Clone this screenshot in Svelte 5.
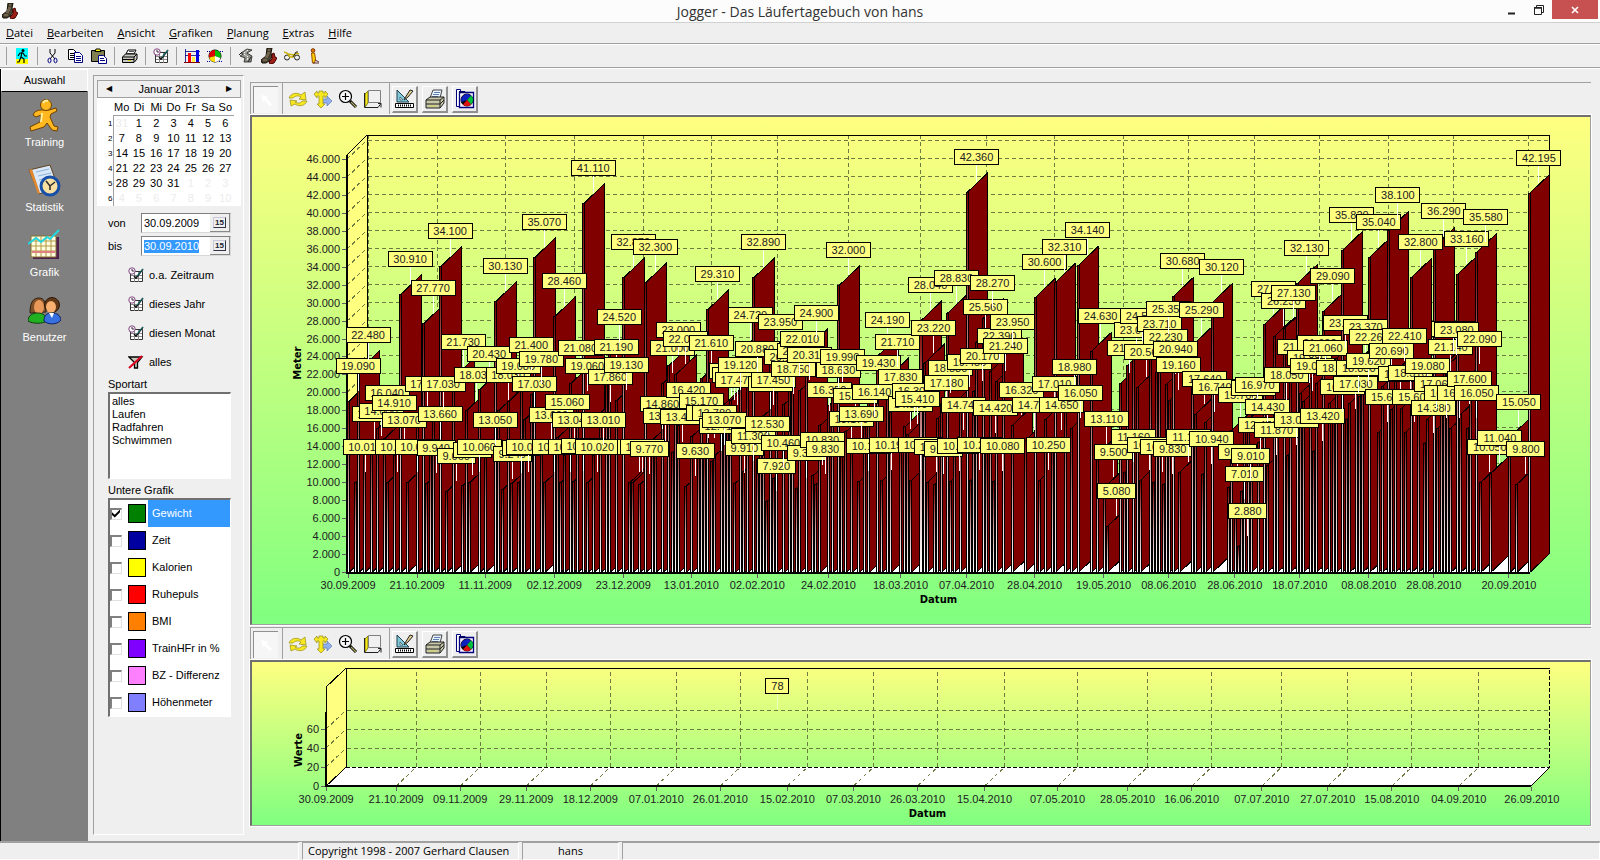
<script lang="ts">
	import { onMount } from 'svelte';

	const menus = ['Datei', 'Bearbeiten', 'Ansicht', 'Grafiken', 'Planung', 'Extras', 'Hilfe'];

	const tools = [
		['run'],
		['cut', 'copy', 'paste'],
		['print'],
		['period'],
		['bars', 'pie'],
		['road', 'shoe', 'bike', 'person']
	];
	const toolTitles: Record<string, string> = {
		run: 'Training',
		cut: 'Ausschneiden',
		copy: 'Kopieren',
		paste: 'Einfügen',
		print: 'Drucken',
		period: 'Zeitraum',
		bars: 'Grafik',
		pie: 'Statistik',
		road: 'Strecken',
		shoe: 'Schuhe',
		bike: 'Räder',
		person: 'Benutzer',
		arrow: 'Auswahl',
		rotate: 'Drehen',
		move: 'Verschieben',
		zoom: 'Zoom',
		depth: 'Tiefe',
		edit: 'Bearbeiten',
		printer: 'Drucken',
		gallery: 'Kopieren'
	};

	const sections = ['Training', 'Statistik', 'Grafik', 'Benutzer'];
	const weekdays = ['Mo', 'Di', 'Mi', 'Do', 'Fr', 'Sa', 'So'];
	// first cell is the 31st of the previous month
	const weeks = Array.from({ length: 6 }, (_, w) =>
		Array.from({ length: 7 }, (_, d) => {
			const n = w * 7 + d;
			if (n === 0) return { day: 31, other: true };
			return n > 31 ? { day: n - 31, other: true } : { day: n, other: false };
		})
	);

	const sports = ['alles', 'Laufen', 'Radfahren', 'Schwimmen'];

	let series = $state([
		{ name: 'Gewicht', color: '#008000', on: true },
		{ name: 'Zeit', color: '#0000a0', on: false },
		{ name: 'Kalorien', color: '#ffff00', on: false },
		{ name: 'Ruhepuls', color: '#ff0000', on: false },
		{ name: 'BMI', color: '#ff8000', on: false },
		{ name: 'TrainHFr in %', color: '#8000ff', on: false },
		{ name: 'BZ - Differenz', color: '#ff80ff', on: false },
		{ name: 'Höhenmeter', color: '#8080ff', on: false }
	]);

	let from = $state('30.09.2009');
	let to = $state('30.09.2010');
	let toInput: HTMLInputElement | null = $state(null);

	onMount(() => {
		toInput?.focus();
		toInput?.select();
	});

	// [days since 30.09.2009, metres]
	const runs = [
		[0, 19090], [2, 10010], [3, 22480], [5, 13700], [7, 14000], [9, 16040], [11, 14910], [12, 10050],
		[14, 13070], [16, 30910], [18, 10000], [21, 17070], [23, 27770], [24, 9940], [25, 13660],
		[26, 17030], [28, 34100], [30, 9060], [32, 21730], [35, 9700], [36, 18030], [37, 10060],
		[40, 20430], [42, 13050], [45, 30130], [46, 18030], [47, 9240], [49, 19080], [50, 9900],
		[52, 10020], [53, 21400], [54, 17030], [56, 19780], [57, 35070], [59, 13600], [60, 10030],
		[63, 28460], [64, 15060], [65, 10020], [66, 13040], [68, 21080], [69, 10100], [70, 19060],
		[72, 41110], [73, 10020], [75, 13010], [77, 17860], [79, 21190], [80, 24520], [82, 19130],
		[84, 32870], [86, 10030], [87, 10010], [89, 9770], [91, 32300], [93, 14860], [94, 13500],
		[96, 21000], [98, 23000], [99, 13400], [100, 22000], [101, 16420], [103, 9630], [105, 15170],
		[107, 13840], [108, 21610], [109, 13780], [110, 29310], [111, 12410], [112, 13070],
		[114, 18500], [115, 18000], [116, 17470], [117, 19120], [118, 9910], [120, 24720],
		[121, 11300], [122, 20880], [124, 32890], [125, 12530], [126, 17060], [127, 17450],
		[128, 7920], [129, 23950], [130, 10460], [131, 20100], [133, 18750], [135, 20700],
		[136, 22010], [137, 9300], [138, 20310], [140, 24900], [142, 10830], [143, 9830],
		[144, 16350], [147, 18630], [148, 19990], [150, 32000], [151, 13170], [152, 15700],
		[154, 13690], [156, 10130], [158, 16140], [159, 19430], [162, 24190], [163, 10190],
		[165, 21710], [166, 17830], [169, 14800], [170, 16300], [171, 15410], [172, 10300],
		[175, 28040], [176, 23220], [177, 10050], [179, 9800], [180, 17180], [181, 18830],
		[183, 28830], [184, 10100], [185, 14740], [187, 19450], [189, 42360], [190, 10200],
		[191, 20170], [192, 25560], [194, 28270], [195, 14420], [196, 22390], [197, 10080],
		[198, 21240], [200, 23950], [203, 16320], [207, 14700], [210, 30600], [211, 10250],
		[213, 17010], [215, 14650], [216, 32310], [219, 18980], [221, 16050], [223, 34140],
		[227, 24630], [229, 13110], [231, 9500], [232, 5080], [236, 21040], [237, 11160],
		[238, 23040], [240, 24560], [241, 20560], [242, 10200], [245, 23710], [246, 10050],
		[247, 22230], [248, 25350], [249, 9830], [250, 20940], [251, 19160], [252, 30680],
		[254, 11180], [258, 25290], [259, 17640], [261, 10940], [262, 16740], [264, 30120],
		[269, 9510], [270, 15760], [271, 7010], [272, 2880], [273, 9010], [274, 16600],
		[275, 16970], [276, 12470], [278, 14430], [280, 27600], [281, 11870], [283, 26230],
		[284, 18050], [286, 27130], [287, 13050], [288, 21200], [290, 32130], [291, 19880],
		[292, 19080], [294, 21600], [295, 13420], [296, 21060], [298, 29090], [300, 18850],
		[301, 16700], [302, 23850], [304, 35820], [305, 17030], [306, 18830], [308, 23370],
		[309, 19620], [310, 22260], [312, 35040], [315, 15600], [316, 20690], [318, 38100],
		[319, 18150], [320, 22410], [322, 18310], [323, 15600], [325, 32800], [327, 19080],
		[329, 14380], [330, 17060], [332, 36290], [333, 16050], [334, 21140], [335, 23150],
		[336, 23080], [337, 16080], [339, 33160], [340, 17600], [342, 16050], [343, 22090],
		[345, 35580], [346, 10050], [349, 11040], [355, 15050], [357, 9800], [361, 42195]
	];

	const runTicks: [number, string][] = [
		[0, '30.09.2009'], [21, '21.10.2009'], [42, '11.11.2009'], [63, '02.12.2009'],
		[84, '23.12.2009'], [105, '13.01.2010'], [125, '02.02.2010'], [147, '24.02.2010'],
		[169, '18.03.2010'], [189, '07.04.2010'], [210, '28.04.2010'], [231, '19.05.2010'],
		[251, '08.06.2010'], [271, '28.06.2010'], [291, '18.07.2010'], [312, '08.08.2010'],
		[332, '28.08.2010'], [355, '20.09.2010']
	];
	const weightTicks: [number, string][] = [
		[0, '30.09.2009'], [21, '21.10.2009'], [40, '09.11.2009'], [60, '29.11.2009'],
		[79, '18.12.2009'], [99, '07.01.2010'], [118, '26.01.2010'], [138, '15.02.2010'],
		[158, '07.03.2010'], [177, '26.03.2010'], [197, '15.04.2010'], [219, '07.05.2010'],
		[240, '28.05.2010'], [259, '16.06.2010'], [280, '07.07.2010'], [300, '27.07.2010'],
		[319, '15.08.2010'], [339, '04.09.2010'], [361, '26.09.2010']
	];

	const DEPTH = 20;
	const runX = (day: number) => Math.round(96 + day * 3.268);
	const runY = (m: number) => Math.round(455 - m * 0.00898);
	const weightX = (day: number) => Math.round(74 + day * 3.338);
	const weightY = (v: number) => Math.round(124 - v * 0.95);

	function format(m: number) {
		if (m < 1000) return String(m);
		return `${Math.floor(m / 1000)}.${String(m % 1000).padStart(3, '0')}`;
	}

	const meterTicks = Array.from({ length: 24 }, (_, i) => i * 2000);
	const bars = runs.map(([day, m]) => ({ x: runX(day), y: runY(m), text: format(m) }));
</script>

{#snippet icon(name: string)}
	<svg class="icon" viewBox="0 0 16 16" width="16" height="16" aria-hidden="true">
		{#if name === 'run'}
			<rect x="2" width="12" height="11" fill="#0ff" />
			<rect x="2" y="11" width="12" height="5" fill="#ff0" />
			<circle cx="9" cy="2.5" r="1.5" />
			<path d="M8 4 7 9l3 2v4M7 9l-2 5H3M4 8l2-3h3l2 3h2" fill="none" stroke="#000" stroke-width="1.2" />
		{:else if name === 'cut'}
			<path d="M5 1v4l5 6M10 1v4l-5 6" fill="none" stroke="#000" />
			<ellipse cx="4.500" cy="12.500" rx="1.500" ry="2.300" fill="none" stroke="#000080" />
			<ellipse cx="10.500" cy="12.500" rx="1.500" ry="2.300" fill="none" stroke="#000080" />
		{:else if name === 'copy'}
			<path d="M.5 1.500h5l3 3v7h-8z" fill="#fff" stroke="#000" />
			<path d="M2 5.500h4M2 7.500h4M2 9.500h4" stroke="#000" />
			<path d="M6.500 4.500h5l3 3v7h-8z" fill="#fff" stroke="#000080" />
			<path d="M8 8.500h5M8 10.500h5M8 12.500h5" stroke="#000080" />
		{:else if name === 'paste'}
			<path d="M.5 2.500h13v11H.5z" fill="#808050" stroke="#000" />
			<path d="M4 3.500h6l-1-2.500H5z" fill="#ff0" stroke="#000" />
			<path d="M7.500 7.500h5l3 3v5h-8z" fill="#fff" stroke="#000080" />
			<path d="M9 10.500h4M9 12.500h5" stroke="#000080" />
		{:else if name === 'print'}
			<path d="m4 6 2-4h8l-2 4z" fill="#fff" stroke="#000" />
			<path d="M7 3.500h5M6 5.500h5" stroke="#555" />
			<path d="m.5 9 3-3h11.500v5l-3 3.500H.5z" fill="#c8c8c0" stroke="#000" />
			<path d="M1 9h11l3-3M12 9v5M1 11.500h11" fill="none" stroke="#000" />
			<path d="M6 12.500h3" stroke="#e0d000" />
		{:else if name === 'period'}
			<path d="M2.500 4.500h12v10h-12z" fill="#fff" stroke="#333" />
			<path d="M3 8.500h11M3 11.500h11M6.500 5v10M10.500 5v10" stroke="#888" />
			<path d="m6 9 2 2 7-9" fill="none" stroke="#111" stroke-width="1.500" />
			<path d="m9 9 6-7" stroke="#00a0a0" stroke-width=".8" />
			<circle cx="4" cy="4" r="3.200" fill="#fff" stroke="#804080" />
			<path d="M4 2v2h2" fill="none" stroke="#402040" />
		{:else if name === 'nofilter'}
			<path d="M1 3h13L9.500 8.500V14h-3V8.500z" fill="#c8c8b8" stroke="#000" stroke-width="1.300" />
			<path d="M1 14 14 2" stroke="#e00020" stroke-width="2" />
		{:else if name === 'bars'}
			<path d="M1.500 1v13M1 3.500h15M1 7.500h15" fill="none" stroke="#000080" stroke-width=".8" />
			<path d="M4 5h3v9H4z" fill="#ff0000" />
			<path d="M8 9h3v5H8z" fill="#fff040" />
			<path d="M12 2h3v12h-3z" fill="#0000e0" />
			<path d="M0 14.500h16" stroke="#800000" />
		{:else if name === 'pie'}
			<circle cx="8" cy="8" r="6" stroke="#000" />
			<path d="M8 8V2a6 6 0 0 1 5.500 8z" fill="#00c000" />
			<path d="M8 8 2.200 9.500A6 6 0 0 1 8 2z" fill="#e00000" />
			<path d="m8 8 5.500 2A6 6 0 0 1 8 14z" fill="#fff" />
			<path d="M8 8v6a6 6 0 0 1-5.800-4.500z" fill="#ffe000" />
			<path d="M0 3.500h3M13 3.500h3M0 13.500h4M12 13.500h4" stroke="#0000a0" stroke-dasharray="1 1" />
		{:else if name === 'road'}
			<path d="m3 5 6-4 5 1-5 3 5 3-1 6H6l1-4-5-2 3-2z" fill="#909088" stroke="#222" stroke-width=".8" />
			<path d="m6 5 4-3M6 6l4 3-1 4" fill="none" stroke="#fff" stroke-dasharray="2 1" />
			<path d="M1 7 4 4M10 14l3-5" stroke="#222" />
		{:else if name === 'shoe'}
			<path d="M6 0h5l-1 5 1 4-3 4-3 2H1l-1-3 5-4z" fill="#484030" stroke="#181008" />
			<path d="m11 6 2-1 1 4 2 1-3 5-4 1-1-2 3-3z" fill="#a02018" stroke="#400" />
			<path d="M7 2h2M6 5h3M5 7h3M4 9h3M2 12h4" stroke="#988868" />
		{:else if name === 'bike'}
			<circle cx="3" cy="9.500" r="2.500" fill="none" stroke="#222" />
			<circle cx="13" cy="9.500" r="2.500" fill="none" stroke="#222" />
			<path d="m0 4 3 1 3 4h3l3-4 3 1M4 6l6 1" fill="none" stroke="#c8b000" stroke-width="1.400" />
			<path d="m9 9 3-5h2" fill="none" stroke="#222" />
		{:else if name === 'person'}
			<circle cx="6" cy="2.500" r="1.800" fill="#e08000" stroke="#803000" />
			<path d="M4.500 5h3l1 6-1 4h-2z" fill="#ffd000" stroke="#a05000" />
			<path d="m8 12 4 2M6 15h6" stroke="#603030" />
		{/if}
	</svg>
{/snippet}

{#snippet chartIcon(name: string)}
	<svg class="icon" viewBox="0 0 20 20" width="20" height="20" aria-hidden="true">
		{#if name === 'arrow'}
			<path d="m5 5 8 2-3 1 6 6-2 2-6-6-1 3z" fill="#fff" />
		{:else if name === 'rotate'}
			<path d="M1 9c2-5 8-6 12-3l4-3 1 8-7-1 2-2c-3-2-6-1-8 1z" fill="#f8e820" stroke="#a09820" stroke-width=".8" />
			<path d="M19 12c-2 5-8 6-12 3l-4 2-1-6 7 1-2 1c3 2 6 1 7-1z" fill="#f8e820" stroke="#a09820" stroke-width=".8" />
		{:else if name === 'move'}
			<path d="M7 10h7V7l5 5-5 5v-3H7z" fill="#90b0f0" stroke="#5070a0" stroke-width=".6" />
			<path d="m1 5 3-3v2h2V2h4v2h2V2l3 3-3 4V7h-2v8h2l-4 4-4-4h2V7H4v2z" fill="#f8e820" stroke="#a09820" stroke-width=".8" />
		{:else if name === 'zoom'}
			<path d="m12 12 6 6" stroke="#000" stroke-width="3" />
			<path d="m13 13 5 5" stroke="#b0a860" stroke-width="1.200" />
			<circle cx="7.500" cy="7.500" r="6" fill="#f8f8f8" stroke="#000" stroke-width="1.200" />
			<path d="M4 7.500h7M7.500 4v7" stroke="#000" stroke-width="1.200" />
		{:else if name === 'depth'}
			<path d="m2 5 3-3v12l-3 4z" fill="#f8e820" stroke="#808000" />
			<path d="M5.500 1.500h12v12h-12z" fill="#f0f0f0" stroke="#808080" />
			<path d="M1.500 4v14.500H15l3-4M15 14.500h3v4" fill="none" stroke="#222" />
		{:else if name === 'edit'}
			<path d="M2 1v12h12z" fill="#80c8d8" stroke="#204050" />
			<path d="M5 8v3h3z" fill="#efefef" stroke="#204050" stroke-width=".6" />
			<path d="m10 9 5-8 3 1-5 6-4 3z" fill="#e8d090" stroke="#222" />
			<path d="M.5 14.500h18v4H.5z" fill="#fff" stroke="#000" />
			<path d="M3 16.500h14" stroke="#000" stroke-width="2" stroke-dasharray="1 1" />
		{:else if name === 'printer'}
			<path d="m5 9 3-8h9l-2 8z" fill="#e8f4ff" stroke="#444" />
			<path d="M9 3.500h6M8 5.500h6M7 7.500h6" stroke="#4060a0" stroke-width=".8" />
			<path d="m1 11 4-3h14v6l-4 5H1z" fill="#c8c8a8" stroke="#222" />
			<path d="M1 11h14l4-3M15 11v8M1 15h14l4-4" fill="none" stroke="#222" />
			<path d="M4 17h8" stroke="#d8d860" />
		{:else if name === 'gallery'}
			<path d="M1.500.500h4v17h-4z" fill="#fff" stroke="#000080" />
			<path d="M4.500 3.500h14v15h-14z" fill="#f8f0ff" stroke="#000080" stroke-width="1.300" />
			<path d="M4 2h6l1 2H4z" fill="#000060" />
			<circle cx="12" cy="11" r="6" stroke="#000" />
			<path d="M12 11 6.500 13A6 6 0 0 1 16 6.500z" fill="#1020c0" />
			<path d="m12 11 4-4.500a6 6 0 0 1 0 9z" fill="#00c040" />
			<path d="m12 11 4 4.500a6 6 0 0 1-8 0z" fill="#e01010" />
		{/if}
	</svg>
{/snippet}

{#snippet chartToolbar()}
	<div class="chart-toolbar">
		<span class="chart-group">
			<button type="button" class="chart-tool pressed" title={toolTitles.arrow}>{@render chartIcon('arrow')}</button>
		</span>
		<span class="chart-group">
			{#each ['rotate', 'move', 'zoom', 'depth'] as name}
				<button type="button" class="chart-tool flat" title={toolTitles[name]}>{@render chartIcon(name)}</button>
			{/each}
		</span>
		<span class="chart-group raised-group">
			{#each ['edit', 'printer', 'gallery'] as name}
				<button type="button" class="chart-tool raised" title={toolTitles[name]}>{@render chartIcon(name)}</button>
			{/each}
		</span>
	</div>
{/snippet}

<div class="window">
	<header class="title-bar">
		<span class="app-icon">{@render icon('shoe')}</span>
		<h1>Jogger - Das Läufertagebuch von hans</h1>
		<div class="window-buttons">
			<button type="button" aria-label="Minimieren">
				<svg viewBox="0 0 12 12" width="12" height="12"><path d="M2 9.500h7" stroke="#222" stroke-width="2" /></svg>
			</button>
			<button type="button" aria-label="Wiederherstellen">
				<svg viewBox="0 0 12 12" width="12" height="12">
					<path d="M1.500 3.500h7v7h-7zM3.500 3V1.500h7v7H9" fill="none" stroke="#222" />
					<path d="M1 4h8" stroke="#222" stroke-width="1.500" />
				</svg>
			</button>
			<button type="button" class="close" aria-label="Schließen">
				<svg viewBox="0 0 12 12" width="12" height="12"><path d="m3 3 6 6M9 3 3 9" stroke="#fff" stroke-width="1.600" /></svg>
			</button>
		</div>
	</header>

	<nav class="menu-bar" aria-label="Menü">
		{#each menus as menu}
			<button type="button"><u>{menu[0]}</u>{menu.slice(1)}</button>
		{/each}
	</nav>

	<div class="tool-bar">
		{#each tools as group}
			<div class="tool-group">
				{#each group as name}
					<button type="button" title={toolTitles[name]}>{@render icon(name)}</button>
				{/each}
			</div>
		{/each}
	</div>

	<div class="content">
		<aside class="sections">
			<div class="sections-title">Auswahl</div>
			{#each sections as section}
				<button type="button" class="section">
					<svg viewBox="0 0 33 33" width="33" height="33" aria-hidden="true">
						{#if section === 'Training'}
							<g fill="#ffb820" stroke="#704000" stroke-width="1">
								<path d="M13 11c-4 0-7 2-8 5l3 2 5-2-1 7-10 5 1 4 13-4 3-4 5 7 5 1 1-4-4-1-4-9 1-3 6-3-1-3-7 2z" />
								<circle cx="18" cy="6" r="5.500" />
							</g>
							<path d="M15 4c1-2 3-3 5-2M14 14l-1 9" fill="none" stroke="#fff0a0" stroke-width="2" />
						{:else if section === 'Statistik'}
							<path d="m1 6 21-5 8 22-19 7z" fill="#d8e8f8" stroke="#604020" />
							<path d="m1 6 3-1 8 24-2 1z" fill="#e08830" />
							<path d="m8 8 13-3M10 12l13-3M11 16l12-3" stroke="#90b0d8" />
							<circle cx="22" cy="22" r="9" fill="#f8e0a0" stroke="#1850a8" stroke-width="3" />
							<path d="m18 17 4 5 5-4M22 22v4" fill="none" stroke="#303030" stroke-width="1.600" />
						{:else if section === 'Grafik'}
							<path d="M5 8h26v22H5z" fill="#502050" />
							<path d="M3 7h25v21H3z" fill="#fffce0" stroke="#807030" />
							<path d="M3 12h25M3 17h25M3 22h25M8 7v21M13 7v21M18 7v21M23 7v21" stroke="#b09840" />
							<path d="M4 23h23" stroke="#e08080" stroke-width="2" />
							<path d="m0 15 8-6 5 4 6-5 3 2 9-9" fill="none" stroke="#20d8e0" stroke-width="2" />
						{:else}
							<path d="M2 19C2 7 6 4 11 4s7 4 7 14z" fill="#805028" stroke="#302010" />
							<ellipse cx="11" cy="13" rx="5" ry="7" fill="#e89858" />
							<path d="M0 27c0-6 5-8 10-8s9 3 9 8c-5 3-14 3-19 0z" fill="#20b020" stroke="#104010" />
							<circle cx="24" cy="11" r="7.500" fill="#603818" stroke="#301808" />
							<ellipse cx="23" cy="13" rx="5" ry="6" fill="#f8b070" />
							<path d="M16 27c0-6 3-8 8-8s8 2 9 7c-4 5-13 5-17 1z" fill="#3870e0" stroke="#102060" />
							<path d="m21 19 3 5 2-5z" fill="#fff" />
						{/if}
					</svg>
					<span>{section}</span>
				</button>
			{/each}
		</aside>

		<section class="filter" aria-label="Filter">
			<div class="calendar">
				<div class="calendar-head">
					<button type="button" aria-label="Vorheriger Monat">◀</button>
					<span>Januar 2013</span>
					<button type="button" aria-label="Nächster Monat">▶</button>
				</div>
				<table>
					<thead>
						<tr>
							<td></td>
							{#each weekdays as day}
								<th scope="col">{day}</th>
							{/each}
						</tr>
					</thead>
					<tbody>
						{#each weeks as week, i}
							<tr>
								<th scope="row">{i + 1}</th>
								{#each week as { day, other }}
									<td class:other>{day}</td>
								{/each}
							</tr>
						{/each}
					</tbody>
				</table>
			</div>

			<div class="dates">
				<label for="from">von</label>
				<span class="date-field">
					<input id="from" type="text" bind:value={from} />
					<button type="button" aria-label="Kalender für von"><span>15</span></button>
				</span>
				<label for="to">bis</label>
				<span class="date-field">
					<input id="to" type="text" bind:value={to} bind:this={toInput} />
					<button type="button" aria-label="Kalender für bis"><span>15</span></button>
				</span>
			</div>

			<div class="ranges">
				<button type="button">{@render icon('period')}o.a. Zeitraum</button>
				<button type="button">{@render icon('period')}dieses Jahr</button>
				<button type="button">{@render icon('period')}diesen Monat</button>
				<button type="button">{@render icon('nofilter')}alles</button>
			</div>

			<label class="list-label" for="sport">Sportart</label>
			<select id="sport" class="sport-list" size="6">
				{#each sports as sport}
					<option>{sport}</option>
				{/each}
			</select>

			<div class="list-label" id="series-label">Untere Grafik</div>
			<div class="series-list" role="group" aria-labelledby="series-label">
				{#each series as item, i}
					<label class:active={i === 0}>
						<input type="checkbox" bind:checked={item.on} />
						<i style:background={item.color}></i>
						<span>{item.name}</span>
					</label>
				{/each}
			</div>
		</section>

		<main class="charts">
			{@render chartToolbar()}
			<div class="chart-frame">
				<svg class="chart" viewBox="0 0 1337 507" role="img" aria-label="Meter pro Datum">
					<defs>
						<linearGradient id="back" x1="0" y1="0" x2="0" y2="1">
							<stop offset="0" stop-color="#ffff80" />
							<stop offset="1" stop-color="#80ff80" />
						</linearGradient>
						<linearGradient id="front" x1="0" y1="0" x2="0" y2="1">
							<stop offset="0" stop-color="#800000" />
							<stop offset="0.5" stop-color="#d0a0a0" />
							<stop offset="1" stop-color="#ffffff" />
						</linearGradient>
					</defs>
					<rect width="1337" height="507" fill="url(#back)" />

					<path d="M95 38 115 18V435L95 455z" fill="#ffff80" />
					<path d="M95 455 115 435H1297L1277 455z" fill="#fff" />
					<g class="grid">
						{#each meterTicks as m}
							<path d="M95 {runY(m)}l{DEPTH} -19H1297" />
						{/each}
						{#each runTicks as [day]}
							<path d="M{runX(day) + DEPTH} 18V435" />
						{/each}
					</g>
					<path class="edge" d="M95 38 115 18H1297V435M115 18V435" />

					<g class="bars">
						{#each bars as { x, y }}
							<path class="side" d="M{x + 1} {y}l{DEPTH} -19V436L{x + 1} 455z" />
							<rect x={x - 1} {y} width="3" height={455 - y} />
							<rect {x} y={y + 1} width="1" height={455 - y} fill="url(#front)" />
						{/each}
					</g>

					<path class="axis" d="M95 38V456H1277" />
					{#each meterTicks as m}
						<path class="tick" d="M94 {runY(m)}h-4" />
						<text x="88" y={runY(m) + 4} text-anchor="end">{format(m)}</text>
					{/each}
					{#each runTicks as [day, label]}
						<path class="tick" d="M{runX(day)} 457v4" />
						<text x={runX(day)} y="472" text-anchor="middle">{label}</text>
					{/each}
					<text class="axis-title" x="686" y="486" text-anchor="middle">Datum</text>
					<text class="axis-title" transform="translate(49 246) rotate(-90)" text-anchor="middle">Meter</text>

					<g class="marks">
						{#each bars as { x, y, text }}
							{@const width = text.length * 6 + 8}
							<path class="leader" d="M{x + 10} {y - 28}v18" />
							<rect x={x + 10 - width / 2} y={y - 43} {width} height="15" />
							<text x={x + 10} y={y - 31} text-anchor="middle">{text}</text>
						{/each}
					</g>
				</svg>
			</div>

			{@render chartToolbar()}
			<div class="chart-frame">
				<svg class="chart" viewBox="0 0 1337 163" role="img" aria-label="Gewicht pro Datum">
					<rect width="1337" height="163" fill="url(#back)" />
					<path d="M74 25 94 6V105L74 124z" fill="#ffff80" />
					<path d="M74 124 94 105H1297L1278 124z" fill="#fff" />
					<g class="grid">
						{#each [20, 40, 60] as v}
							<path d="M74 {weightY(v)}l{DEPTH} -19H1297" />
						{/each}
						{#each weightTicks.slice(1, -1) as [day]}
							<path d="M{weightX(day)} 124l{DEPTH} -19V6" />
						{/each}
					</g>
					<path class="edge" d="M74 124V25L94 6H1297M94 6V105L74 124M1278 124 1297 105" />
					<path class="edge dashed" d="M94 105H1297V6" />
					<path class="axis" d="M74 50V124H1278" />
					{#each [0, 20, 40, 60] as v}
						<path class="tick" d="M73 {weightY(v)}h-4" />
						<text x="67" y={weightY(v) + 4} text-anchor="end">{v}</text>
					{/each}
					{#each weightTicks as [day, label]}
						<path class="tick" d="M{weightX(day)} 125v4" />
						<text x={weightX(day)} y="141" text-anchor="middle">{label}</text>
					{/each}
					<text class="axis-title" x="675" y="155" text-anchor="middle">Datum</text>
					<text class="axis-title" transform="translate(50 88) rotate(-90)" text-anchor="middle">Werte</text>
					<g class="marks">
						<path class="leader" d="M525 31v16" opacity=".5" />
						<rect x="513" y="16" width="23" height="15" />
						<text x="525" y="28" text-anchor="middle">78</text>
					</g>
				</svg>
			</div>
		</main>
	</div>

	<footer class="status-bar">
		<span class="status-empty"></span>
		<span class="status-copyright">Copyright 1998 - 2007 Gerhard Clausen</span>
		<span class="status-user">hans</span>
		<span class="status-rest"></span>
	</footer>
</div>

<style>
	:global(body) {
		margin: 0;
		background: #efefef;
	}
	.window {
		display: flex;
		flex-direction: column;
		min-height: 100vh;
		box-sizing: border-box;
		background: #efefef;
		color: #000;
		font: 11px/13px 'Liberation Sans', Arial, sans-serif;
	}
	button {
		margin: 0;
		padding: 0;
		border: 0;
		background: none;
		color: inherit;
		font: inherit;
	}
	svg {
		display: block;
		flex: none;
	}

	.title-bar {
		display: grid;
		grid-template-columns: 1fr auto 1fr;
		height: 22px;
		border-bottom: 1px solid #d0d0d0;
		background: #fcfcfc;
	}
	.app-icon {
		padding: 3px 2px;
	}
	.title-bar h1 {
		margin: 0;
		color: #333;
		font: 14px/24px 'Open Sans', 'Noto Sans', sans-serif;
	}
	.window-buttons {
		display: flex;
		justify-content: flex-end;
		padding-right: 2px;
	}
	.window-buttons button {
		display: grid;
		place-items: center;
		width: 27px;
		height: 19px;
	}
	.window-buttons .close {
		width: 46px;
		background: #c75050;
	}

	.menu-bar {
		display: flex;
		height: 20px;
		border-bottom: 1px solid #a0a0a0;
	}
	.menu-bar button {
		padding: 0 7px;
		font: 11px/20px 'Open Sans', 'Noto Sans', sans-serif;
	}
	.menu-bar button:first-child {
		padding-left: 6px;
	}
	.tool-bar {
		display: flex;
		height: 22px;
		border-top: 1px solid #fff;
		border-bottom: 1px solid #a0a0a0;
		padding-left: 3px;
	}
	.tool-group {
		display: flex;
		align-items: center;
		padding-left: 3px;
		margin: 2px 0 2px 3px;
		border-left: 1px solid #a0a0a0;
		padding-right: 1px;
	}
	.tool-group button {
		display: grid;
		place-items: center;
		width: 23px;
		height: 20px;
	}

	.content {
		display: flex;
		flex: 1;
		border-top: 1px solid #fff;
	}
	.sections {
		flex: none;
		width: 87px;
		border-left: 1px solid #000;
		background: #808080;
		color: #fff;
	}
	.sections-title {
		border: 1px solid #fff;
		border-bottom-color: #000;
		background: #efefef;
		color: #000;
		line-height: 21px;
		text-align: center;
	}
	.section {
		display: flex;
		flex-direction: column;
		align-items: center;
		gap: 4px;
		width: 100%;
		padding: 7px 0 8px;
	}

	.filter {
		flex: none;
		width: 144px;
		box-sizing: content-box;
		margin: 6px 0 6px 5px;
		padding: 4px 2px 4px 3px;
		border: 1px solid #a0a0a0;
		border-right-color: #fff;
		border-bottom-color: #fff;
	}
	.calendar {
		height: 126px;
		background: #fff;
	}
	.calendar-head {
		display: flex;
		justify-content: space-between;
		border: 1px solid #a0a0a0;
		background: #efefef;
		line-height: 16px;
	}
	.calendar-head button {
		width: 22px;
		font-size: 8px;
	}
	.calendar table {
		width: 137px;
		margin-top: 2px;
		border-collapse: collapse;
		table-layout: fixed;
		text-align: center;
	}
	.calendar th,
	.calendar td {
		height: 15px;
		padding: 0;
		font-weight: normal;
	}
	.calendar tbody {
		line-height: 15px;
	}
	.calendar thead th {
		border-bottom: 1px solid #a0a0a0;
	}
	.calendar tbody th {
		width: 16px;
		border-right: 1px solid #a0a0a0;
		font-size: 8px;
		text-align: right;
	}
	.calendar thead td {
		width: 16px;
	}
	.calendar .other {
		color: #ececec;
	}

	.dates {
		display: grid;
		grid-template-columns: 33px 90px;
		row-gap: 3px;
		align-items: center;
		margin: 7px 0 0 11px;
	}
	.date-field {
		display: flex;
		height: 18px;
		border: 1px solid #808080;
		border-right-color: #d8d8d8;
		border-bottom-color: #d8d8d8;
		background: #fff;
	}
	.date-field input {
		width: 64px;
		min-width: 0;
		padding: 0 2px;
		border: 0;
		outline: 0;
		background: none;
		font: inherit;
	}
	.date-field input::selection {
		background: #3399ff;
		color: #fff;
	}
	.date-field button {
		display: grid;
		flex: 1;
		place-items: center;
		border-right: 1px solid #888;
		border-bottom: 1px solid #888;
		background: #efefef;
	}
	.date-field button span {
		padding: 0 1px;
		border: 1px solid #c8c8d8;
		border-right-color: #334;
		border-bottom-color: #334;
		color: #223;
		font: bold 8px/9px 'Liberation Sans', Arial, sans-serif;
	}

	.ranges {
		display: flex;
		flex-direction: column;
		align-items: flex-start;
		gap: 13px;
		margin: 11px 0 0 31px;
	}
	.ranges button {
		display: flex;
		align-items: center;
		gap: 5px;
		line-height: 16px;
	}

	.list-label {
		display: block;
		margin: 8px 0 0 11px;
	}
	.sport-list {
		display: block;
		box-sizing: border-box;
		width: 123px;
		height: 87px;
		margin: 1px 0 0 11px;
		padding: 1px;
		border: 1px solid #fff;
		border-top: 2px solid #707070;
		border-left: 2px solid #707070;
		border-radius: 0;
		outline: 0;
		background: #fff;
		color: #000;
		font: inherit;
		overflow: hidden;
	}
	.sport-list option {
		min-height: 13px;
		padding: 0 1px;
	}
	.sport-list + .list-label {
		margin-top: 5px;
	}
	.series-list {
		width: 120px;
		margin: 1px 0 0 11px;
		border: 1px solid #fff;
		border-top: 2px solid #707070;
		border-left: 2px solid #707070;
		background: #fff;
	}
	.series-list label {
		display: flex;
		align-items: center;
		gap: 6px;
		height: 27px;
	}
	.series-list input {
		appearance: none;
		width: 12px;
		height: 12px;
		margin: 0;
		border: 1px solid #e0e0e0;
		border-top: 2px solid #808080;
		border-left: 2px solid #808080;
	}
	.series-list input:checked::before {
		display: block;
		width: 8px;
		height: 8px;
		background: #000;
		clip-path: polygon(0 35%, 35% 65%, 100% 0, 100% 35%, 35% 100%, 0 70%);
		content: '';
	}
	.series-list i {
		width: 16px;
		height: 17px;
		border: 1px solid #000;
	}
	.series-list span {
		flex: 1;
		margin-left: -4px;
		padding-left: 4px;
		line-height: 27px;
	}
	.series-list .active span {
		background: #3399ff;
		color: #fff;
	}

	.charts {
		flex: 1;
		min-width: 0;
		margin: 13px 9px 0 6px;
	}
	.chart-toolbar {
		display: flex;
		height: 32px;
		border-top: 1px solid #a0a0a0;
		border-left: 1px solid #a0a0a0;
	}
	.chart-frame + .chart-toolbar {
		margin-top: 2px;
	}
	.chart-group {
		display: flex;
		align-items: center;
		padding: 0 4px 0 2px;
		border-right: 1px solid #a0a0a0;
	}
	.raised-group {
		gap: 4px;
		border-right: 0;
	}
	.chart-tool {
		display: grid;
		place-items: center;
		width: 25px;
		height: 27px;
		box-sizing: border-box;
	}
	.raised {
		width: 26px;
		border: 1px solid #fff;
		border-right: 2px solid #909090;
		border-bottom: 2px solid #909090;
	}
	.pressed {
		border-top: 1px solid #909090;
		border-left: 1px solid #909090;
		background: #f6f6f6;
	}
	.chart-frame {
		border: 1px solid #a0a0a0;
		border-top: 2px solid #707070;
		border-left: 2px solid #707070;
		outline: 1px solid #fff;
	}
	.chart {
		width: 100%;
		height: auto;
		font: 11px 'Liberation Sans', Arial, sans-serif;
	}
	.chart path,
	.chart rect {
		shape-rendering: crispEdges;
	}
	.chart text {
		fill: #202020;
	}
	.chart .axis-title {
		fill: #000;
		font: bold 10px 'DejaVu Sans', Verdana, sans-serif;
	}
	.grid path {
		fill: none;
		stroke: #6c7c40;
		stroke-dasharray: 4 3;
	}
	.edge {
		fill: none;
		stroke: #000;
	}
	.dashed {
		stroke-dasharray: 4 2;
	}
	.axis {
		fill: none;
		stroke: #000;
		stroke-width: 2;
	}
	.tick {
		stroke: #606060;
	}
	.side {
		fill: #800000;
		stroke: #000;
	}
	.leader {
		stroke: #fff;
	}
	.marks rect {
		fill: #ffff80;
		stroke: #000;
	}

	.status-bar {
		display: flex;
		gap: 3px;
		height: 18px;
		border-top: 1px solid #a0a0a0;
		font: 11px/16px 'Open Sans', 'Noto Sans', sans-serif;
	}
	.status-bar span {
		box-sizing: border-box;
		border: 1px solid #a0a0a0;
		border-right-color: #fff;
		border-bottom-color: #fff;
	}
	.status-bar .status-empty {
		width: 299px;
		border-left: 0;
	}
	.status-copyright {
		width: 217px;
		padding-left: 5px;
		white-space: nowrap;
	}
	.status-user {
		width: 97px;
		text-align: center;
	}
	.status-rest {
		flex: 1;
	}
</style>
